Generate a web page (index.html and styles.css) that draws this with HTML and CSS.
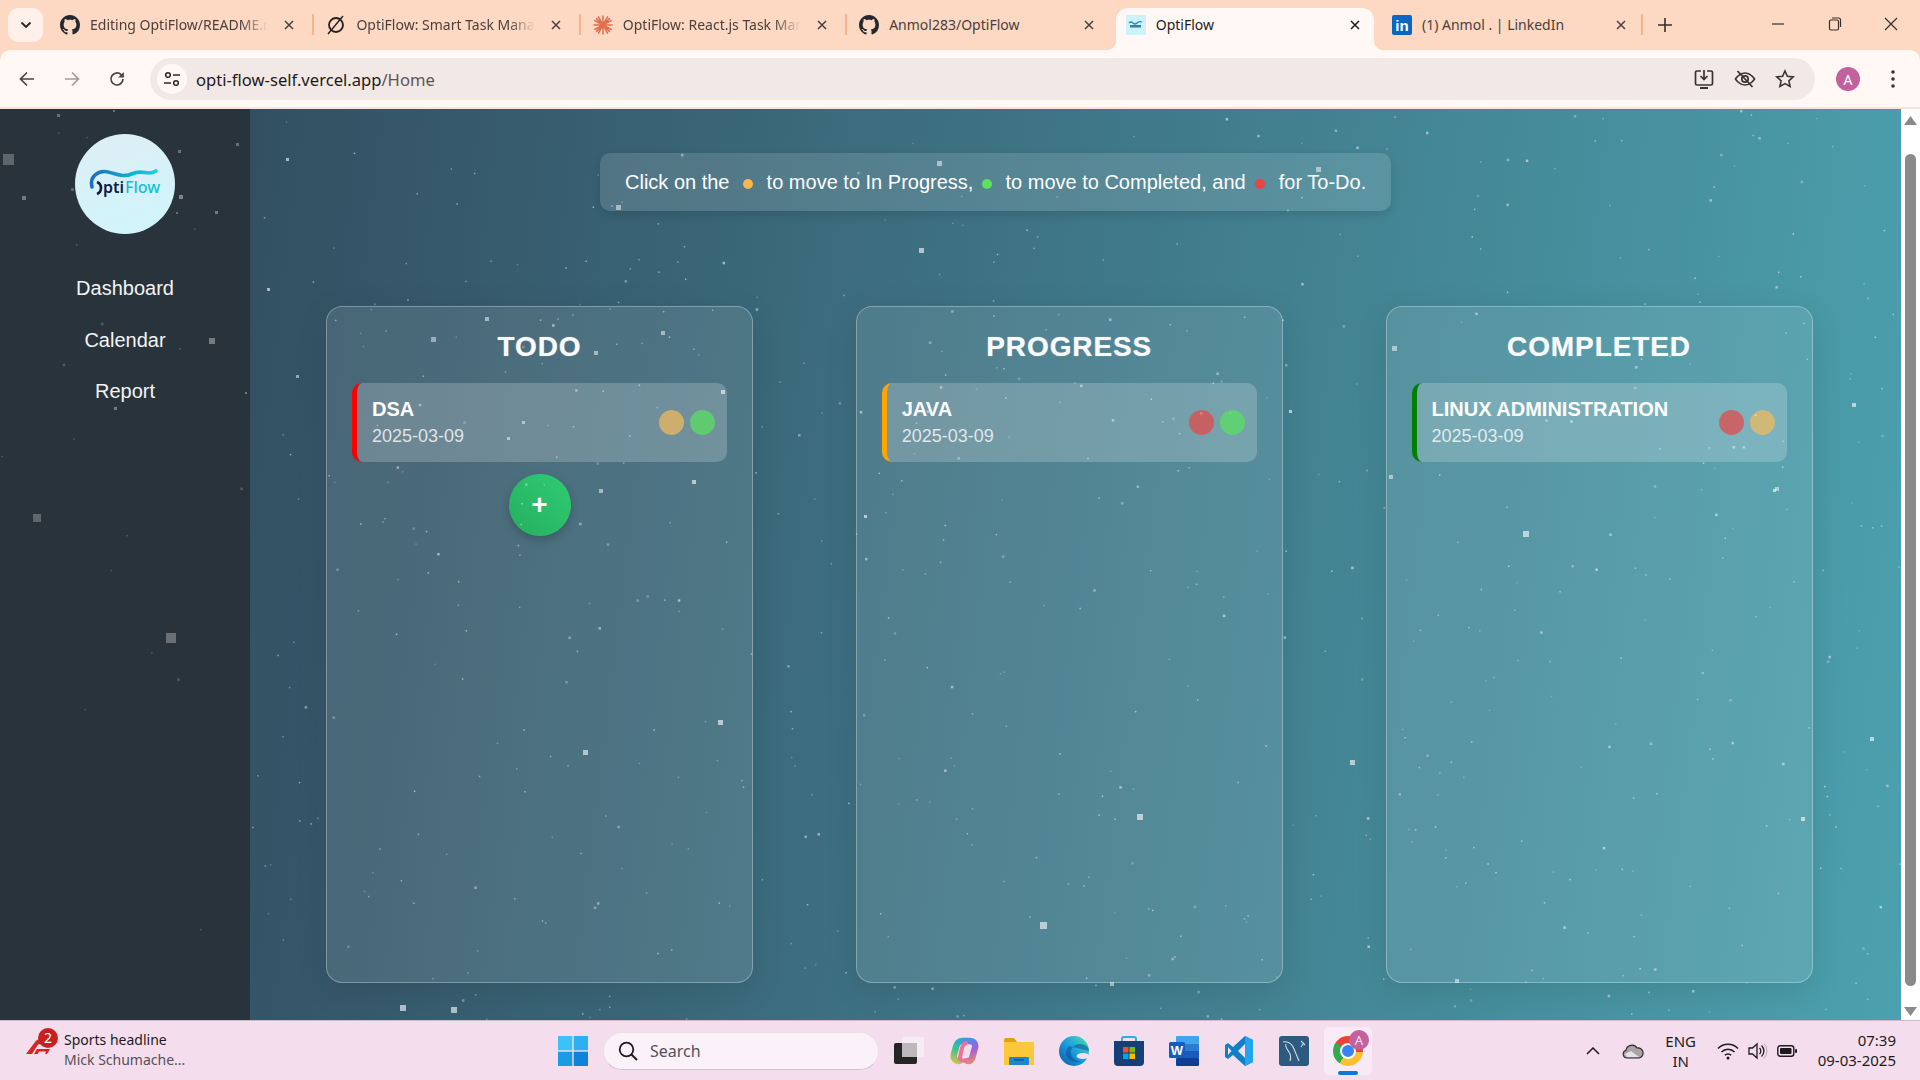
FILE: index.html
```html
<!DOCTYPE html>
<html lang="en">
<head>
<meta charset="utf-8">
<title>OptiFlow</title>
<link rel="stylesheet" href="styles.css">
</head>
<body>
<svg class="defs" width="0" height="0" aria-hidden="true">
  <defs>
    <symbol id="gh" viewBox="0 0 16 16"><path fill="#24292f" d="M8 0C3.58 0 0 3.58 0 8c0 3.54 2.29 6.53 5.47 7.59.4.07.55-.17.55-.38 0-.19-.01-.82-.01-1.49-2.01.37-2.53-.49-2.69-.94-.09-.23-.48-.94-.82-1.13-.28-.15-.68-.52-.01-.53.63-.01 1.08.58 1.23.82.72 1.21 1.87.87 2.33.66.07-.52.28-.87.51-1.07-1.78-.2-3.64-.89-3.64-3.95 0-.87.31-1.59.82-2.15-.08-.2-.36-1.02.08-2.12 0 0 .67-.21 2.2.82.64-.18 1.32-.27 2-.27.68 0 1.36.09 2 .27 1.53-1.04 2.2-.82 2.2-.82.44 1.1.16 1.92.08 2.12.51.56.82 1.27.82 2.15 0 3.07-1.87 3.75-3.65 3.95.29.25.54.73.54 1.48 0 1.07-.01 1.93-.01 2.2 0 .21.15.46.55.38A8.013 8.013 0 0016 8c0-4.42-3.58-8-8-8z"/></symbol>
    <symbol id="x" viewBox="0 0 12 12"><path d="M2 2l8 8M10 2l-8 8" stroke="currentColor" stroke-width="1.5" fill="none"/></symbol>
    <linearGradient id="wave" gradientUnits="userSpaceOnUse" x1="2" x2="70" y1="0" y2="0"><stop offset="0" stop-color="#1f66c0"/><stop offset=".55" stop-color="#14a9cf"/><stop offset="1" stop-color="#0fd6d6"/></linearGradient>
    <linearGradient id="edgeg" x1="0" x2="1" y1="1" y2="0"><stop offset="0" stop-color="#0c59a4"/><stop offset=".5" stop-color="#1b9de2"/><stop offset="1" stop-color="#50e6a0"/></linearGradient>
    <linearGradient id="copg" gradientUnits="userSpaceOnUse" x1="14" y1="2" x2="26" y2="28"><stop offset="0" stop-color="#2f9fea"/><stop offset=".5" stop-color="#a05fe0"/><stop offset="1" stop-color="#f5925a"/></linearGradient>
    <linearGradient id="copg2" gradientUnits="userSpaceOnUse" x1="16" y1="2" x2="4" y2="28"><stop offset="0" stop-color="#2aa0e8"/><stop offset=".5" stop-color="#3ec48e"/><stop offset="1" stop-color="#e8c03c"/></linearGradient>
  </defs>
</svg>

<header class="tabstrip">
  <button class="tabsearch"><svg width="12" height="8" viewBox="0 0 12 8"><path d="M1.5 1.5L6 6l4.5-4.5" stroke="#2b2422" stroke-width="1.9" fill="none"/></svg></button>
  <div class="tab">
    <svg class="favicon" viewBox="0 0 16 16"><use href="#gh"/></svg>
    <span class="tabtitle">Editing OptiFlow/README.md at main</span>
    <svg class="tabclose" viewBox="0 0 12 12"><use href="#x"/></svg>
  </div>
  <div class="tab">
    <svg class="favicon" viewBox="0 0 20 20"><circle cx="10" cy="10" r="7" fill="none" stroke="#222" stroke-width="1.8"/><path d="M17 1L2 19" stroke="#222" stroke-width="1.4"/></svg>
    <span class="tabtitle">OptiFlow: Smart Task Management</span>
    <svg class="tabclose" viewBox="0 0 12 12"><use href="#x"/></svg>
  </div>
  <div class="tab">
    <svg class="favicon" viewBox="0 0 20 20"><g stroke="#e0704f" stroke-width="1.5" stroke-linecap="round"><path d="M10 1v18M1 10h18M3.6 3.6l12.8 12.8M16.4 3.6L3.6 16.4M5.5 1.8l9 16.4M14.5 1.8l-9 16.4M1.8 5.5l16.4 9M18.2 5.5l-16.4 9"/></g></svg>
    <span class="tabtitle">OptiFlow: React.js Task Manager</span>
    <svg class="tabclose" viewBox="0 0 12 12"><use href="#x"/></svg>
  </div>
  <div class="tab">
    <svg class="favicon" viewBox="0 0 16 16"><use href="#gh"/></svg>
    <span class="tabtitle plain">Anmol283/OptiFlow</span>
    <svg class="tabclose" viewBox="0 0 12 12"><use href="#x"/></svg>
  </div>
  <div class="tab active">
    <svg class="favicon" viewBox="0 0 20 20"><rect width="20" height="20" fill="#cdf2fa"/><path d="M3 8q2-2 4 0t4 0 5-1" stroke="#1c8ed0" stroke-width="1.3" fill="none"/><rect x="4" y="10" width="11" height="2.5" fill="#3a7f9e"/></svg>
    <span class="tabtitle plain">OptiFlow</span>
    <svg class="tabclose" viewBox="0 0 12 12"><use href="#x"/></svg>
  </div>
  <div class="tab">
    <span class="favicon linkedin">in</span>
    <span class="tabtitle plain">(1) Anmol . | LinkedIn</span>
    <svg class="tabclose" viewBox="0 0 12 12"><use href="#x"/></svg>
  </div>
  <div class="tabsep"></div>
  <svg class="newtab" width="14" height="14" viewBox="0 0 14 14"><path d="M7 0v14M0 7h14" stroke="#3a2f2b" stroke-width="1.6"/></svg>
  <div class="winctrls">
    <svg width="14" height="14" viewBox="0 0 14 14"><path d="M1 7h12" stroke="#3a2f2b" stroke-width="1.2"/></svg>
    <svg width="14" height="14" viewBox="0 0 14 14"><rect x="1.5" y="3" width="9" height="10" rx="1.5" fill="none" stroke="#3a2f2b" stroke-width="1.2"/><path d="M4 1h6.5a2 2 0 0 1 2 2v7" fill="none" stroke="#3a2f2b" stroke-width="1.2"/></svg>
    <svg width="14" height="14" viewBox="0 0 14 14"><path d="M1 1l12 12M13 1L1 13" stroke="#3a2f2b" stroke-width="1.2"/></svg>
  </div>
</header>

<nav class="toolbar">
  <div class="navbtns">
    <svg width="18" height="18" viewBox="0 0 18 18"><path d="M16 9H3M9 2.5L2.5 9 9 15.5" stroke="#4d4340" stroke-width="1.7" fill="none"/></svg>
    <svg width="18" height="18" viewBox="0 0 18 18"><path d="M2 9h13M9 2.5L15.5 9 9 15.5" stroke="#a49a97" stroke-width="1.7" fill="none"/></svg>
    <svg width="18" height="18" viewBox="0 0 18 18"><path d="M15 9a6 6 0 1 1-1.8-4.3L15.5 7" stroke="#4d4340" stroke-width="1.7" fill="none"/><path d="M15.8 2v5.6h-5.6z" fill="#4d4340"/></svg>
  </div>
  <div class="omnibox">
    <span class="sitechip"><svg width="18" height="18" viewBox="0 0 18 18"><g fill="none" stroke="#2d2725" stroke-width="1.5"><circle cx="5" cy="5" r="2.3"/><path d="M10 5h7M1 13h7"/><circle cx="13" cy="13" r="2.3"/></g></svg></span>
    <span class="url">opti-flow-self.vercel.app<span class="urlpath">/Home</span></span>
    <div class="omniicons">
      <svg width="22" height="22" viewBox="0 0 22 22"><path d="M8 3H4a1.5 1.5 0 0 0-1.5 1.5v11A1.5 1.5 0 0 0 4 17h14a1.5 1.5 0 0 0 1.5-1.5v-11A1.5 1.5 0 0 0 18 3h-4" fill="none" stroke="#3b3331" stroke-width="1.7"/><path d="M7 20h8" stroke="#3b3331" stroke-width="2"/><path d="M11 2v9M7.5 8l3.5 3.5L14.5 8" fill="none" stroke="#3b3331" stroke-width="1.7"/></svg>
      <svg width="22" height="22" viewBox="0 0 22 22"><path d="M1.5 11S5 5 11 5s9.5 6 9.5 6-3.5 6-9.5 6-9.5-6-9.5-6z" fill="none" stroke="#3b3331" stroke-width="1.7"/><circle cx="11" cy="11" r="3.2" fill="none" stroke="#3b3331" stroke-width="1.7"/><path d="M3.5 3l15 16" stroke="#3b3331" stroke-width="1.8"/></svg>
      <svg width="20" height="20" viewBox="0 0 20 20"><path d="M10 2l2.4 5.3 5.8.6-4.3 3.900 1.2 5.700L10 14.600 4.900 17.500l1.200-5.700L1.800 7.900l5.800-.6z" fill="none" stroke="#3b3331" stroke-width="1.6"/></svg>
    </div>
  </div>
  <span class="avatar">A</span>
  <svg class="kebab" width="4" height="18" viewBox="0 0 4 18"><g fill="#3b3331"><circle cx="2" cy="2" r="1.8"/><circle cx="2" cy="9" r="1.8"/><circle cx="2" cy="16" r="1.8"/></g></svg>
</nav>

<div class="viewport">
  <div class="page">
    <aside class="sidebar">
      <div class="logo">
        <svg width="76" height="34" viewBox="0 0 76 34">
          <path d="M5 20C2 9 12 3 21 5S36 11 46 6.5 60 9.5 69 4" fill="none" stroke="url(#wave)" stroke-width="3.6" stroke-linecap="round"/>
          <path d="M10 15a6.500 6.500 0 0 1 0 12" fill="none" stroke="#0d1b4d" stroke-width="2.6"/>
          <text x="16" y="26" class="logoa">pti</text><text x="38" y="26" class="logob">Flow</text>
        </svg>
      </div>
      <ul class="sidenav">
        <li>Dashboard</li>
        <li>Calendar</li>
        <li>Report</li>
      </ul>
    </aside>
    <main class="main">
      <div class="banner">Click on the <i class="hint yellow"></i> to move to In Progress, <i class="hint green"></i> to move to Completed, and <i class="hint red"></i> for To-Do.</div>
      <section class="board">
        <div class="column">
          <h2>TODO</h2>
          <div class="task t-red">
            <div><div class="taskname">DSA</div><div class="taskdate">2025-03-09</div></div>
            <div class="dots"><i class="dot d-yellow"></i><i class="dot d-green"></i></div>
          </div>
          <button class="addbtn">+</button>
        </div>
        <div class="column">
          <h2>PROGRESS</h2>
          <div class="task t-orange">
            <div><div class="taskname">JAVA</div><div class="taskdate">2025-03-09</div></div>
            <div class="dots"><i class="dot d-red"></i><i class="dot d-green"></i></div>
          </div>
        </div>
        <div class="column">
          <h2>COMPLETED</h2>
          <div class="task t-green">
            <div><div class="taskname">LINUX ADMINISTRATION</div><div class="taskdate">2025-03-09</div></div>
            <div class="dots"><i class="dot d-red"></i><i class="dot d-yellow"></i></div>
          </div>
        </div>
      </section>
    </main>
    <canvas id="stars" class="stars" width="1901" height="911"></canvas>
  </div>
  <div class="scrollbar">
    <svg width="13" height="9" viewBox="0 0 13 9"><path d="M6.5 0L13 9H0z" fill="#8a8a8a"/></svg>
    <div class="thumb"></div>
    <svg width="13" height="9" viewBox="0 0 13 9"><path d="M6.5 9L13 0H0z" fill="#8a8a8a"/></svg>
  </div>
</div>

<footer class="taskbar">
  <div class="news">
    <div class="newsicon">
      <svg width="28" height="18" viewBox="0 0 28 18"><path d="M1 18L10 6q2-3 6-3h12l-5 5H15q-2 0-3 2l-5 8zM12 13h13l-3 5h-2l1-2.500h-7L12.500 18H9z" fill="#e1211f"/></svg>
      <span class="badge">2</span>
    </div>
    <div class="newstext"><div>Sports headline</div><div class="muted">Mick Schumache...</div></div>
  </div>
  <div class="taskcenter">
    <svg class="win" width="30" height="30" viewBox="0 0 30 30"><rect width="14.3" height="14.3" fill="#3cc3f5"/><rect x="15.7" width="14.3" height="14.3" fill="#2bb0f0"/><rect y="15.7" width="14.3" height="14.3" fill="#1a9be6"/><rect x="15.7" y="15.7" width="14.3" height="14.3" fill="#0f83dc"/></svg>
    <div class="searchbox">
      <svg width="20" height="20" viewBox="0 0 20 20"><circle cx="8.5" cy="8.5" r="6.8" fill="none" stroke="#1e1a1d" stroke-width="1.8"/><path d="M13.5 13.5L19 19" stroke="#1e1a1d" stroke-width="2"/></svg>
      <span>Search</span>
    </div>
    <div class="apps">
      <div class="app"><svg width="30" height="30" viewBox="0 0 30 30"><rect x="0" y="7" width="23" height="21" rx="2" fill="#252525"/><rect x="8" y="1" width="22" height="20" rx="2" fill="#f4f0f3" fill-opacity=".85"/><rect x="8" y="7" width="15" height="14" fill="#bcb8bb"/></svg></div>
      <div class="app"><svg width="30" height="30" viewBox="0 0 30 30"><g fill="none" stroke-width="6.5" stroke-linecap="round"><path d="M14 5C9 5 8 8 7 11L5 18C4 22 6 25 10 25" stroke="url(#copg2)"/><path d="M19 25C23 25 23 22 24 19L26 12C27 8 25 5 20 5H15" stroke="url(#copg)"/><path d="M17 7C14 8 13 11 12.500 14L11 21C11 24 14 26 17 24" stroke="#f0709a" stroke-width="4"/></g></svg></div>
      <div class="app"><svg width="30" height="28" viewBox="0 0 30 28"><path d="M0 3q0-2 2-2h8l3 4H0z" fill="#e0a20d"/><path d="M0 5h30v23H0z" fill="#fbc83a"/><rect x="5" y="20" width="20" height="8" rx="1" fill="#1c86d1"/><path d="M10 23h10" stroke="#0a4f8c" stroke-width="1.2"/></svg></div>
      <div class="app"><svg width="30" height="30" viewBox="0 0 30 30"><circle cx="15" cy="15" r="15" fill="url(#edgeg)"/><path d="M30 15c0-4-4-7-9-7-6 0-10 5-9 10s6 8 11 7c-8 3-16-1-16-8 0-3 1-5 3-7" fill="#0b4f94" fill-opacity=".55"/><ellipse cx="24" cy="20" rx="6.5" ry="3" fill="#f4dfee"/></svg></div>
      <div class="app"><svg width="30" height="30" viewBox="0 0 30 30"><path d="M8 5V3q0-2 2-2h10q2 0 2 2v2" fill="none" stroke="#25b0ee" stroke-width="2"/><path d="M0 5h30v21q0 4-4 4H4q-4 0-4-4z" fill="#153f76"/><rect x="9" y="11" width="5.5" height="5.5" fill="#f25022"/><rect x="15.5" y="11" width="5.5" height="5.5" fill="#7fba00"/><rect x="9" y="17.5" width="5.5" height="5.5" fill="#00a4ef"/><rect x="15.5" y="17.5" width="5.5" height="5.5" fill="#ffb900"/></svg></div>
      <div class="app"><svg width="30" height="30" viewBox="0 0 30 30"><rect x="7" width="23" height="8" rx="1" fill="#41a5ee"/><rect x="7" y="8" width="23" height="7" fill="#2b7cd3"/><rect x="7" y="15" width="23" height="7" fill="#185abd"/><rect x="7" y="22" width="23" height="8" rx="1" fill="#103f91"/><rect y="6" width="16" height="16" rx="1.5" fill="#185abd"/><text x="8" y="18.5" text-anchor="middle" class="wordw">W</text></svg></div>
      <div class="app"><svg width="30" height="30" viewBox="0 0 30 30"><path d="M21 0l8 4v22l-8 4L9 19l-5 4-3-2V9l3-2 5 4z" fill="#0f7fc7"/><path d="M21 0l8 4v22l-8 4z" fill="#22a5f1"/><path d="M21 8l-7 7 7 7z" fill="#f4dfee"/><path d="M4 11v8l3.5-4z" fill="#f4dfee"/></svg></div>
      <div class="app"><svg width="30" height="30" viewBox="0 0 30 30"><rect width="30" height="30" rx="3" fill="#2c5b7f"/><path d="M4 6c5-1 9 2 11 7s3 7 5 12M7 8c-1 3 1 5 3 8s2 6 1 9M22 5l4 4M24 8l-2 3" fill="none" stroke="#cfdde8" stroke-width="1.1"/></svg></div>
      <div class="app current">
        <span class="chrome"><span class="chromecore"></span></span>
        <span class="chromebadge">A</span>
        <span class="runbar"></span>
      </div>
    </div>
  </div>
  <div class="tray">
    <svg class="tchev" width="14" height="8" viewBox="0 0 14 8"><path d="M1 7l6-6 6 6" fill="none" stroke="#1e1a1d" stroke-width="1.5"/></svg>
    <svg class="tcloud" width="22" height="16" viewBox="0 0 22 16"><path d="M5 15a4 4 0 0 1-1-7.800A6 6 0 0 1 15 5a4.500 4.500 0 0 1 2 10z" fill="#a9a4a8" stroke="#2d292c" stroke-width="1.2"/><path d="M3 11l6-3 8 6H5z" fill="#e6e2e5"/></svg>
    <div class="lang"><div>ENG</div><div>IN</div></div>
    <svg class="twifi" width="22" height="18" viewBox="0 0 22 18"><g fill="none" stroke="#1e1a1d" stroke-width="1.5"><path d="M1 6.500a14 14 0 0 1 20 0M4.500 10a9 9 0 0 1 13 0M7.800 13.300a4.500 4.500 0 0 1 6.400 0"/></g><circle cx="11" cy="16" r="1.5" fill="#1e1a1d"/></svg>
    <svg class="tvol" width="20" height="18" viewBox="0 0 20 18"><path d="M1 6h3.500L9 2v14l-4.500-4H1z" fill="none" stroke="#1e1a1d" stroke-width="1.3"/><path d="M11.500 6a4 4 0 0 1 0 6M13.500 3.500a7.500 7.500 0 0 1 0 11" fill="none" stroke="#1e1a1d" stroke-width="1.3"/><path d="M16 1.500a11 11 0 0 1 0 15" fill="none" stroke="#b9aab5" stroke-width="1"/></svg>
    <svg class="tbatt" width="20" height="12" viewBox="0 0 20 12"><rect x=".8" y=".8" width="16" height="10.400" rx="2.500" fill="none" stroke="#1e1a1d" stroke-width="1.4"/><rect x="3" y="3" width="11.500" height="6" rx="1" fill="#1e1a1d"/><rect x="18" y="4" width="2" height="4" rx="1" fill="#1e1a1d"/></svg>
    <div class="clock"><div>07:39</div><div>09-03-2025</div></div>
  </div>
</footer>
<script src="script.js"></script>
</body>
</html>
```
FILE: styles.css
```css
* { box-sizing: border-box; }
html, body { margin: 0; height: 100%; overflow: hidden; }
body {
  display: flex;
  flex-direction: column;
  height: 100vh;
  font-family: "Noto Sans", "Open Sans", sans-serif;
  background: #fdd8c3;
}
.defs { position: absolute; }

/* tab strip */
.tabstrip {
  display: flex;
  align-items: flex-end;
  height: 50px;
  padding-left: 8px;
  background: #fdd8c3;
  flex: none;
}
.tabsearch {
  display: flex;
  align-items: center;
  justify-content: center;
  width: 35px;
  height: 34px;
  margin: 0 3px 8px 0;
  padding: 0;
  border: 0;
  border-radius: 10px;
  background: #fff0e9;
}
.tab {
  position: relative;
  display: flex;
  align-items: center;
  width: 266.4px;
  height: 42px;
  padding: 0 14px 8px 14px;
  color: #4a3f3b;
  border-radius: 12px 12px 0 0;
}
.tab::after {
  content: "";
  position: absolute;
  top: 6px;
  left: 0;
  width: 2px;
  height: 21px;
  background: #f4b48c;
}
.tab:first-of-type::after, .tab.active::after, .tab.active + .tab::after { display: none; }
.tab.active {
  width: 258px;
  margin: 0 4.2px;
  padding-left: 10px;
  padding-right: 10px;
  color: #1f1a18;
  background: #fff8f5;
}
.tab.active::before {
  content: "";
  position: absolute;
  left: -10px;
  right: -10px;
  bottom: 0;
  height: 10px;
  background:
    radial-gradient(circle at 0 0, transparent 10px, #fff8f5 10.5px) left bottom / 10px 10px no-repeat,
    radial-gradient(circle at 100% 0, transparent 10px, #fff8f5 10.5px) right bottom / 10px 10px no-repeat;
}
.favicon { flex: none; width: 20px; height: 20px; }
.linkedin {
  display: flex;
  align-items: flex-end;
  justify-content: center;
  border-radius: 2px;
  background: #0a66c2;
  color: #fff;
  font: bold 15px/18px "Liberation Sans", sans-serif;
}
.tabtitle {
  flex: 1;
  min-width: 0;
  margin-left: 10px;
  overflow: hidden;
  white-space: nowrap;
  font-size: 14px;
  line-height: 20px;
  -webkit-mask-image: linear-gradient(to right, #000 85%, transparent 100%);
  mask-image: linear-gradient(to right, #000 85%, transparent 100%);
}
.tabtitle.plain { -webkit-mask-image: none; mask-image: none; }
.tabclose { flex: none; width: 12px; height: 12px; margin: 0 3px 0 15px; }
.tabsep { width: 2px; height: 21px; margin: 0 0 15px -3px; background: #f4b48c; }
.newtab { margin: 0 0 18px 15px; }
.winctrls {
  display: flex;
  gap: 42.5px;
  margin: 0 22px 19px auto;
}

/* toolbar */
.toolbar {
  display: flex;
  align-items: center;
  height: 59px;
  flex: none;
  padding: 1px 25px 0 18px;
  background: #fff8f5;
  border-bottom: 2px solid #fbe3d8;
  border-radius: 10px 10px 0 0;
}
.navbtns { display: flex; gap: 27px; }
.omnibox {
  display: flex;
  align-items: center;
  width: 1667px;
  height: 42px;
  margin-left: 24px;
  padding: 0 20px 0 7px;
  border-radius: 21px;
  background: #f2e8e5;
}
.sitechip {
  display: flex;
  align-items: center;
  justify-content: center;
  width: 30px;
  height: 30px;
  border-radius: 50%;
  background: #fff8f5;
}
.url { margin-left: 9px; font-size: 16.6px; color: #1f1a18; }
.urlpath { color: #5f5552; }
.omniicons { display: flex; align-items: center; gap: 19px; margin-left: auto; }
.avatar {
  display: flex;
  align-items: center;
  justify-content: center;
  width: 24px;
  height: 24px;
  margin-left: 21px;
  border-radius: 50%;
  background: #c2619e;
  color: #fff;
  font-size: 14px;
}
.kebab { margin-left: 31px; }

/* viewport */
.viewport { display: flex; flex: 1; min-height: 0; }
.page {
  position: relative;
  display: flex;
  flex: 1;
  min-width: 0;
  background: linear-gradient(97deg, #2f4457 0%, #4ca1af 100%);
  font-family: "Liberation Sans", Arial, sans-serif;
  color: #fff;
}
.stars { position: absolute; inset: 0; pointer-events: none; }
.sidebar {
  display: flex;
  flex-direction: column;
  align-items: center;
  width: 250px;
  flex: none;
  padding-top: 25px;
  background: #29333c;
}
.logo {
  display: flex;
  align-items: center;
  justify-content: center;
  width: 100px;
  height: 100px;
  border-radius: 50%;
  background: linear-gradient(160deg, #deeef4, #cff5fc);
}
.logoa { font: 600 16px "Noto Sans", sans-serif; fill: #0d1b4d; }
.logob { font: 500 16px "Noto Sans", sans-serif; fill: #0fc4d0; }
.wordw { font: bold 13px "Liberation Sans", sans-serif; fill: #fff; }
.sidenav { margin: 29px 0 0; padding: 0; list-style: none; }
.sidenav li { height: 51.7px; line-height: 51.7px; text-align: center; font-size: 20px; color: #f2f4f5; }

.main { flex: 1; min-width: 0; display: flex; flex-direction: column; padding: 44px 0 0 76px; }
.banner {
  align-self: flex-start;
  margin-left: 274px;
  padding: 15px 25px;
  font-size: 20px;
  line-height: 28px;
  white-space: nowrap;
  border-radius: 10px;
  background: rgba(255, 255, 255, .13);
  box-shadow: 0 4px 10px rgba(0, 0, 0, .12);
}
.hint {
  display: inline-block;
  width: 10px;
  height: 10px;
  margin: 0 8px 0 3px;
  border-radius: 50%;
}
.hint.yellow { margin-left: 8px; background: #fcb64a; }
.hint.green { background: #5fe05f; }
.hint.red { margin-left: 4px; background: #ea4444; }

.board {
  display: grid;
  grid-template-columns: repeat(3, 427px);
  column-gap: 102.75px;
  height: 677px;
  margin-top: 95px;
}
.column {
  display: flex;
  flex-direction: column;
  padding: 24px 25px;
  border: 1px solid rgba(255, 255, 255, .3);
  border-radius: 16px;
  background: rgba(255, 255, 255, .1);
  box-shadow: 0 8px 32px rgba(0, 0, 0, .1);
}
.column h2 {
  margin: 0 0 20px;
  font-size: 28px;
  line-height: 32px;
  letter-spacing: .9px;
  font-weight: bold;
  text-align: center;
  color: #f8fafb;
  text-shadow: 0 0 1px rgba(255, 255, 255, .6);
}
.task {
  display: flex;
  align-items: center;
  justify-content: space-between;
  height: 79px;
  padding: 0 12px 0 15px;
  border-left: 5px solid;
  border-radius: 10px;
  background: rgba(255, 255, 255, .2);
}
.t-red { border-left-color: #f00; }
.t-orange { border-left-color: #ffa500; }
.t-green { border-left-color: #008000; }
.taskname { font-size: 20px; font-weight: bold; line-height: 23px; }
.taskdate { margin-top: 5px; font-size: 18px; line-height: 21px; color: rgba(255, 255, 255, .78); }
.dots { display: flex; gap: 6px; }
.dot { width: 25px; height: 25px; border-radius: 50%; opacity: .7; }
.d-yellow { background: #f5bb58; }
.d-green { background: #59e35d; }
.d-red { background: #e94543; }
.addbtn {
  display: flex;
  align-items: center;
  justify-content: center;
  align-self: center;
  width: 62px;
  height: 62px;
  margin-top: 12px;
  padding: 0 0 1px;
  border: 0;
  border-radius: 50%;
  color: #fff;
  font: bold 28px "Liberation Sans", sans-serif;
  background: linear-gradient(45deg, #27ae60, #2ecc71);
  box-shadow: 0 4px 10px rgba(0, 0, 0, .2);
}

/* scrollbar */
.scrollbar {
  display: flex;
  flex-direction: column;
  align-items: center;
  width: 19px;
  flex: none;
  padding-top: 7px;
  background: #fff;
}
.thumb { width: 11px; height: 832px; margin: 29px 0 21px; border-radius: 6px; background: #8a8a8a; }

/* taskbar */
.taskbar {
  display: flex;
  align-items: center;
  height: 60px;
  flex: none;
  border-top: 1px solid #cdbcc8;
  background: #f4deee;
  color: #1e1a1d;
}
.news { display: flex; align-items: center; width: 558px; flex: none; padding: 0 0 2px 25px; }
.newsicon { position: relative; width: 39px; height: 40px; }
.newsicon svg { position: absolute; left: 0; bottom: 16px; }
.badge {
  position: absolute;
  top: -2px;
  left: 13px;
  width: 20px;
  height: 20px;
  border-radius: 50%;
  background: #c8201e;
  color: #fff;
  font-size: 14px;
  line-height: 20px;
  text-align: center;
}
.newstext { font-size: 14px; line-height: 20px; }
.muted { color: #55505a; }
.taskcenter { display: flex; align-items: center; }
.win { flex: none; }
.searchbox {
  display: flex;
  align-items: center;
  gap: 12px;
  width: 276px;
  height: 38px;
  margin-left: 15px;
  padding-left: 14px;
  border: 1px solid #ecdde7;
  border-bottom-color: #d4c3cf;
  border-radius: 19px;
  background: #faf2f8;
  color: #55505a;
  font-size: 16px;
}
.apps { display: flex; margin-left: 2px; }
.app {
  position: relative;
  display: flex;
  align-items: center;
  justify-content: center;
  width: 55px;
  height: 48px;
}
.app.current { width: 48px; margin-left: 3px; border-radius: 5px; background: #f9ebf5; }
.chrome {
  display: flex;
  align-items: center;
  justify-content: center;
  width: 30px;
  height: 30px;
  border-radius: 50%;
  background: conic-gradient(#ea4335 0 95deg, #fbc02d 95deg 215deg, #34a853 215deg 305deg, #ea4335 305deg);
}
.chromecore { box-sizing: content-box; width: 12px; height: 12px; border: 2px solid #fff; border-radius: 50%; background: #3b82f6; }
.chromebadge {
  position: absolute;
  top: 3px;
  right: 3px;
  width: 20px;
  height: 20px;
  border-radius: 50%;
  background: #c2619e;
  color: #f4dfee;
  font-size: 13px;
  line-height: 20px;
  text-align: center;
}
.runbar { position: absolute; left: 14px; bottom: 0; width: 20px; height: 4px; border-radius: 2px; background: #0a78d4; }
.tray { display: flex; align-items: center; margin-left: auto; padding-right: 24px; font-size: 15px; }
.tchev { margin-right: 22px; }
.tcloud { margin-right: 10px; }
.lang { width: 54px; text-align: center; line-height: 20px; margin-right: 9px; }
.twifi { margin-right: 9px; }
.tvol { margin-right: 9px; }
.tbatt { margin-right: 21px; }
.clock { text-align: right; line-height: 20px; margin-bottom: 2px; }
```
FILE: script.js
```js
(function () {
  var c = document.getElementById('stars');
  var g = c.getContext('2d');
  var top = 109;
  // [x, y, size, alpha] in window coordinates: the prominent particles
  var big = [[3,154,11,.25],[57,114,3,.3],[113,110,2,.3],[236,143,3,.3],[178,150,3,.3],[22,196,4,.35],[71,188,3,.25],[179,195,4,.4],[176,212,2,.3],[215,211,3,.35],[209,338,6,.35],[245,392,2,.35],[114,407,3,.35],[286,158,3,.6],[267,288,3,.6],[296,375,3,.5],
    [33,514,8,.25],[166,633,10,.3],[400,1005,6,.6],[451,1007,6,.6],[1040,922,7,.6],[1137,814,6,.6],[1350,760,5,.6],[1523,531,6,.6],[583,750,5,.6],[718,720,5,.6],[616,205,5,.5],[919,248,5,.6],[1392,346,5,.5],[1389,475,4,.5],[1455,979,4,.5],[1110,982,4,.5],[1289,410,3,.6],[864,515,3,.6],[1801,817,4,.6],[1870,737,4,.6],[1773,489,3,.6],[431,337,5,.45],[485,317,4,.5],[661,331,4,.5],[594,351,4,.5],[692,480,4,.6],[599,489,4,.5],[522,421,3,.5],[507,437,3,.5],[721,390,4,.6],[1852,403,4,.6],[937,161,5,.5],[1316,167,5,.5],[1775,487,4,.5]];
  big.forEach(function (s) {
    g.fillStyle = 'rgba(255,255,255,' + s[3] + ')';
    g.fillRect(s[0], s[1] - top, s[2], s[2]);
  });
  // the many tiny particles, from a fixed seed so that the picture is stable
  var seed = 283;
  function r() { seed = (seed * 16807) % 2147483647; return seed / 2147483647; }
  for (var i = 0; i < 720; i++) {
    var x = r() * 1901, y = r() * 911, side = r() < .8 ? 1.5 : 2.5;
    if (x < 250 && r() < .8) continue;
    g.fillStyle = 'rgba(255,255,255,' + (x < 250 ? .2 : .2 + r() * .35) + ')';
    g.fillRect(x, y, side, side);
  }
})();
```
